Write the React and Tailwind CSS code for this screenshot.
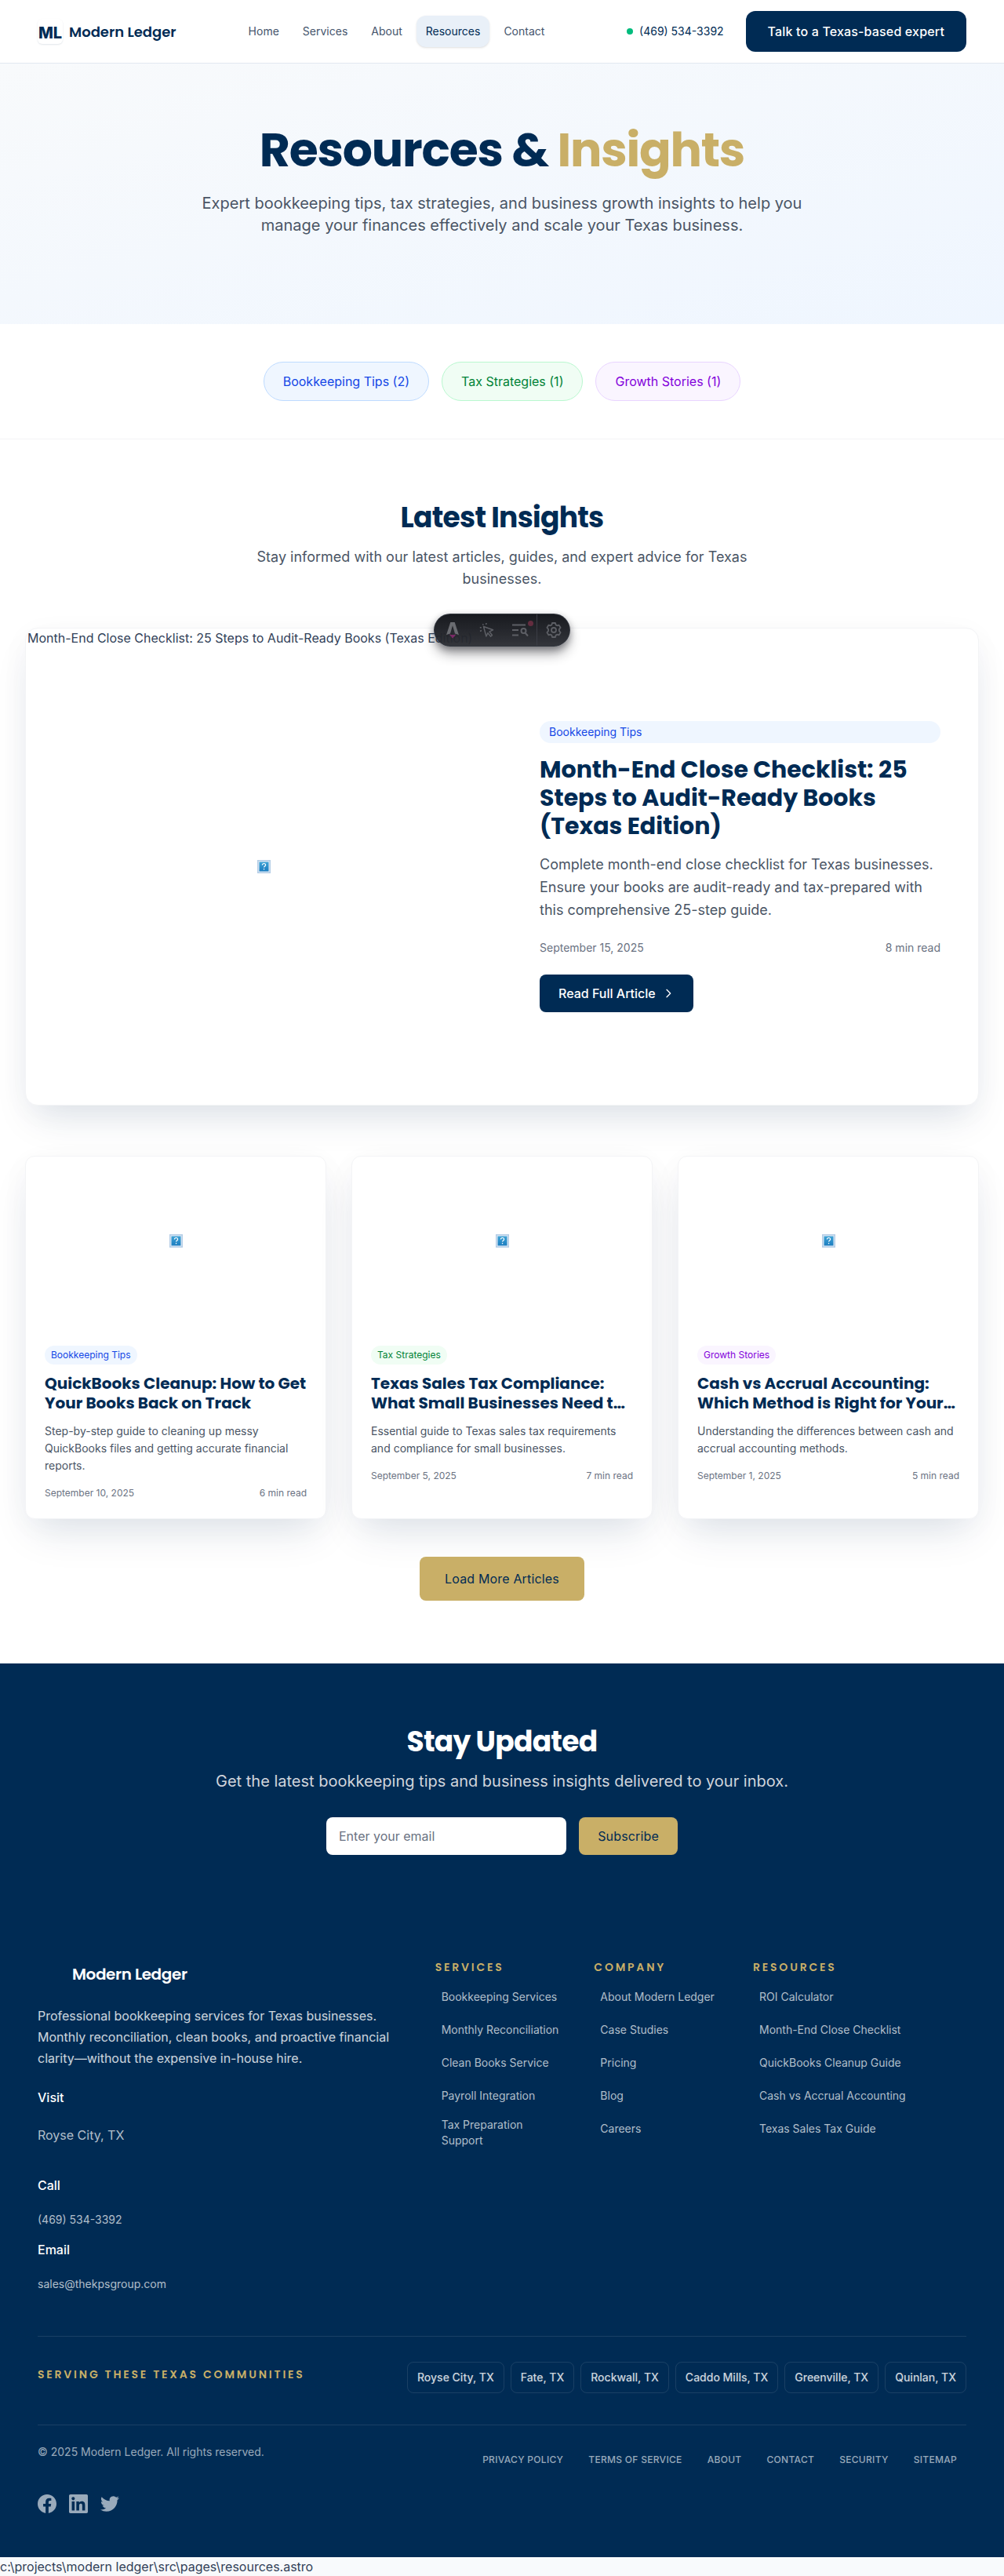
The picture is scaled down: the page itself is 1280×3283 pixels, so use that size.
import React from "react";

const HEAD = "font-['Poppins','Inter',sans-serif]";
const SHADOW = "shadow-[0_25px_50px_-12px_rgba(0,43,84,0.13),0_8px_40px_rgba(0,43,84,0.03)]";

const NAV = ["Home", "Services", "About", "Resources", "Contact"];

const TONES = {
  blue: "border-blue-200 bg-blue-50 text-blue-700",
  green: "border-green-200 bg-green-50 text-green-700",
  purple: "border-purple-200 bg-purple-50 text-purple-700",
};

const FILTERS = [
  { label: "Bookkeeping Tips (2)", tone: "blue" },
  { label: "Tax Strategies (1)", tone: "green" },
  { label: "Growth Stories (1)", tone: "purple" },
];

const ARTICLES = [
  {
    tag: "Bookkeeping Tips",
    tone: "blue",
    title: "QuickBooks Cleanup: How to Get Your Books Back on Track",
    text: "Step-by-step guide to cleaning up messy QuickBooks files and getting accurate financial reports.",
    date: "September 10, 2025",
    read: "6 min read",
  },
  {
    tag: "Tax Strategies",
    tone: "green",
    title: "Texas Sales Tax Compliance: What Small Businesses Need t…",
    text: "Essential guide to Texas sales tax requirements and compliance for small businesses.",
    date: "September 5, 2025",
    read: "7 min read",
  },
  {
    tag: "Growth Stories",
    tone: "purple",
    title: "Cash vs Accrual Accounting: Which Method is Right for Your…",
    text: "Understanding the differences between cash and accrual accounting methods.",
    date: "September 1, 2025",
    read: "5 min read",
  },
];

const COLUMNS = [
  {
    title: "Services",
    span: "col-span-2",
    links: ["Bookkeeping Services", "Monthly Reconciliation", "Clean Books Service", "Payroll Integration", "Tax Preparation Support"],
  },
  {
    title: "Company",
    span: "col-span-2",
    links: ["About Modern Ledger", "Case Studies", "Pricing", "Blog", "Careers"],
  },
  {
    title: "Resources",
    span: "col-span-3",
    links: ["ROI Calculator", "Month-End Close Checklist", "QuickBooks Cleanup Guide", "Cash vs Accrual Accounting", "Texas Sales Tax Guide"],
  },
];

const CITIES = ["Royse City, TX", "Fate, TX", "Rockwall, TX", "Caddo Mills, TX", "Greenville, TX", "Quinlan, TX"];
const LEGAL = ["Privacy Policy", "Terms of Service", "About", "Contact", "Security", "Sitemap"];

function MissingImage() {
  return (
    <svg width="17" height="17" viewBox="0 0 17 17" aria-hidden="true">
      <defs>
        <linearGradient id="missing" x1="0" y1="0" x2="0" y2="1">
          <stop offset="0" stopColor="#3fa3d6" />
          <stop offset="1" stopColor="#1b7dc0" />
        </linearGradient>
      </defs>
      <rect width="17" height="17" fill="#b4cde6" />
      <rect x="1.5" y="1.5" width="14" height="14" fill="#e3eef8" />
      <rect x="2.5" y="2.5" width="12" height="12" fill="url(#missing)" />
      <path d="M6.4 6.6c0-1.3.9-2.1 2.1-2.1s2.1.8 2.1 1.9c0 1.6-2 1.7-2 3.2" fill="none" stroke="#fff" strokeWidth="1.2" />
      <rect x="7.9" y="11" width="1.3" height="1.3" fill="#fff" />
    </svg>
  );
}

function DevToolbar() {
  return (
    <div className="absolute -top-[18px] left-1/2 flex h-[42px] w-[174px] -translate-x-1/2 overflow-visible rounded-full border border-[#343841]/90 bg-linear-to-b from-[#13151a]/98 to-[#2b2d33]/96 text-[#5d5f65] shadow-[0_10px_16px_-2px_rgba(19,21,26,0.45),0_3px_8px_rgba(19,21,26,0.3)]">
      <button type="button" aria-label="Menu" className="flex w-[46px] items-center justify-center">
        <svg width="20" height="22" viewBox="0 0 20 22" aria-hidden="true">
          <path d="M7.3 1h5.4L18 17.2a18 18 0 0 0-5-1.7L10 5.3 7 15.5a18 18 0 0 0-5 1.7z" fill="#6a6c71" />
          <path d="M6.4 16.2c2 1.2 5.2 1.2 7.2 0 .3 1.9-.8 2.7-1.7 3.2-.8.5-1.3 1.1-1.4 2-1.5-.3-2.2-1.1-2.1-2.3-1.1-.6-2.2-1.4-2-2.9z" fill="#7b2a67" />
        </svg>
      </button>
      <button type="button" aria-label="Inspect" className="flex w-[42px] items-center justify-center">
        <svg width="20" height="20" viewBox="0 0 20 20" fill="none" stroke="currentColor" strokeWidth="1.5" aria-hidden="true">
          <path d="M5.500 5.500l12 4.300-4.600 2.300 3.600 4.300-2 1.700-3.600-4.400-2 4.300z" strokeLinejoin="round" />
          <path d="M1 11.500l2-1M.8 6.800h2M4.500 2.200l.7 1.500M9 1l-.3 2" />
        </svg>
      </button>
      <button type="button" aria-label="Audit" className="relative flex w-[42px] items-center justify-center">
        <svg width="22" height="18" viewBox="0 0 22 18" fill="none" stroke="currentColor" strokeWidth="2" aria-hidden="true">
          <path d="M1 2.500h17M1 9h8M1 15.500h8" />
          <circle cx="15.500" cy="10" r="3" />
          <path d="M17.500 12.500l3.500 4" />
        </svg>
        <span className="absolute top-2 right-1 size-[7px] rounded-full bg-[#632d3f]" />
      </button>
      <button type="button" aria-label="Settings" className="flex flex-1 items-center justify-center border-l border-[#3b3d45]">
        <svg width="20" height="20" viewBox="0 0 20 20" fill="none" stroke="currentColor" strokeWidth="1.800" strokeLinejoin="round" aria-hidden="true">
          <path d="M8 1h4l.6 2.400 1.600.9 2.400-.7 2 3.400-1.700 1.800v2.400l1.700 1.800-2 3.400-2.400-.7-1.600.9L12 19H8l-.6-2.400-1.600-.9-2.400.7-2-3.400 1.700-1.800V8.800L1.400 7l2-3.400 2.400.7 1.600-.9z" />
          <circle cx="10" cy="10" r="3" />
        </svg>
      </button>
    </div>
  );
}

function Header() {
  return (
    <header className="border-b border-slate-200 bg-white">
      <div className="flex h-20 items-center px-12">
        <a href="#" className="mr-20 flex items-center gap-2 text-[#002b54]">
          <span className="flex size-8 items-center justify-center rounded-md pt-1 text-xl font-extrabold shadow-[0_1px_2px_rgba(0,43,84,0.12)]">ML</span>
          <span className={`${HEAD} text-[18px] font-semibold`}>Modern Ledger</span>
        </a>
        <nav className="flex gap-1.5 text-sm">
          {NAV.map((item) =>
            item === "Resources" ? (
              <a key={item} href="#" aria-current="page" className="rounded-xl bg-[#e9f0f8] px-3 py-2.5 text-[#002b54] shadow-sm">{item}</a>
            ) : (
              <a key={item} href="#" className="px-3 py-2.5 text-slate-600">{item}</a>
            )
          )}
        </nav>
        <div className="ml-auto flex items-center gap-7">
          <a href="#" className="flex items-center gap-2 text-sm text-[#002b54]">
            <span className="size-2 rounded-full bg-emerald-500" />
            (469) 534-3392
          </a>
          <a href="#" className="rounded-xl bg-[#002b54] px-7 py-[14px] text-base font-medium tracking-[0.01em] text-white">Talk to a Texas-based expert</a>
        </div>
      </div>
    </header>
  );
}

function Featured() {
  return (
    <div className="relative">
      <article className={`grid min-h-[609px] grid-cols-2 overflow-hidden rounded-2xl border border-gray-100 bg-white ${SHADOW}`}>
        <div className="relative flex items-center justify-center">
          <MissingImage />
          <span className="absolute top-0 left-0.5 text-base whitespace-nowrap text-slate-700">
            Month-End Close Checklist: 25 Steps to Audit-Ready Books (Texas Edition)
          </span>
        </div>
        <div className="flex flex-col justify-center px-12">
          <span className="mb-4 rounded-full bg-blue-50 px-3 py-1 text-sm text-blue-700">Bookkeeping Tips</span>
          <h3 className={`${HEAD} mb-4 text-[30px] leading-9 font-bold text-[#002b54]`}>
            Month-End Close Checklist: 25 Steps to Audit-Ready Books (Texas Edition)
          </h3>
          <p className="mb-6 text-lg leading-[29px] text-gray-600">
            Complete month-end close checklist for Texas businesses. Ensure your books are audit-ready and tax-prepared with this comprehensive 25-step guide.
          </p>
          <div className="mb-6 flex justify-between text-sm text-gray-500">
            <time>September 15, 2025</time>
            <span>8 min read</span>
          </div>
          <a href="#" className="flex items-center gap-2 self-start rounded-lg bg-[#002b54] px-6 py-3 text-base font-medium text-white">
            Read Full Article
            <svg width="16" height="16" viewBox="0 0 24 24" fill="none" stroke="currentColor" strokeWidth="2" strokeLinecap="round" strokeLinejoin="round" aria-hidden="true">
              <path d="M9 5l7 7-7 7" />
            </svg>
          </a>
        </div>
      </article>
      <DevToolbar />
    </div>
  );
}

function ArticleCard({ article }) {
  return (
    <article className={`overflow-hidden rounded-xl border border-gray-100 bg-white ${SHADOW}`}>
      <div className="flex aspect-video items-center justify-center">
        <MissingImage />
      </div>
      <div className="flex flex-col items-start px-6 pt-[26px] pb-6">
        <span className={`mb-3 rounded-full px-2 py-1 text-xs ${TONES[article.tone]}`}>{article.tag}</span>
        <h3 className={`${HEAD} mb-3 text-xl leading-[25px] font-bold text-[#002b54]`}>{article.title}</h3>
        <p className="mb-4 text-sm leading-[22px] text-gray-600">{article.text}</p>
        <div className="flex w-full justify-between text-xs text-gray-500">
          <time>{article.date}</time>
          <span>{article.read}</span>
        </div>
      </div>
    </article>
  );
}

function Footer() {
  return (
    <footer className="bg-[#002b54] px-12 pt-14 pb-14">
      <div className="grid grid-cols-12 gap-8 pb-11">
        <div className="col-span-5">
          <a href="#" className={`${HEAD} flex h-8 items-center pl-11 text-xl font-semibold tracking-[-0.02em] text-white`}>Modern Ledger</a>
          <p className="mt-6 max-w-[460px] text-base leading-[27px] text-white/80">
            Professional bookkeeping services for Texas businesses. Monthly reconciliation, clean books, and proactive financial clarity—without the expensive in-house hire.
          </p>
          <h4 className="mt-6 text-base font-medium text-white">Visit</h4>
          <p className="mt-6 text-base text-white/70">Royse City, TX</p>
          <h4 className="mt-10 text-base font-medium text-white">Call</h4>
          <a href="#" className="mt-2.5 flex h-11 items-center text-sm text-white/70">(469) 534-3392</a>
          <h4 className="mt-1 text-base font-medium text-white">Email</h4>
          <a href="#" className="mt-2.5 flex h-11 items-center text-sm text-white/70">sales@thekpsgroup.com</a>
        </div>
        {COLUMNS.map((col) => (
          <nav key={col.title} aria-label={col.title} className={col.span}>
            <h4 className={`${HEAD} mb-3 text-sm leading-[14px] font-semibold tracking-[0.2em] text-[#c9af67] uppercase`}>{col.title}</h4>
            <ul className="flex flex-col gap-1">
              {col.links.map((link) => (
                <li key={link}>
                  <a href="#" className="flex min-h-[38px] items-center px-2 py-1 text-sm text-white/70">{link}</a>
                </li>
              ))}
            </ul>
          </nav>
        ))}
      </div>
      <div className="flex justify-between border-t border-white/10 pt-8 pb-10">
        <h4 className={`${HEAD} text-sm leading-8 font-semibold tracking-[0.2em] text-[#c9af67] uppercase`}>Serving these Texas communities</h4>
        <ul className="flex gap-2">
          {CITIES.map((city) => (
            <li key={city}>
              <a href="#" className="flex h-10 items-center rounded-lg border border-white/10 px-3 text-sm font-medium text-white/80">{city}</a>
            </li>
          ))}
        </ul>
      </div>
      <div className="flex items-start justify-between border-t border-white/10 pt-6">
        <div>
          <p className="text-sm text-white/60">© 2025 Modern Ledger. All rights reserved.</p>
          <div className="mt-11 flex gap-4 text-[#99aabb]">
            <a href="#" aria-label="Facebook">
              <svg width="24" height="24" viewBox="0 0 24 24" fill="currentColor" aria-hidden="true">
                <path d="M24 12.073c0-6.627-5.373-12-12-12s-12 5.373-12 12c0 5.990 4.388 10.954 10.125 11.854v-8.385H7.078v-3.470h3.047V9.430c0-3.007 1.792-4.669 4.533-4.669 1.312 0 2.686.235 2.686.235v2.953H15.830c-1.491 0-1.956.925-1.956 1.874v2.250h3.328l-.532 3.470h-2.796v8.385C19.612 23.027 24 18.062 24 12.073z" />
              </svg>
            </a>
            <a href="#" aria-label="LinkedIn">
              <svg width="24" height="24" viewBox="0 0 24 24" fill="currentColor" aria-hidden="true">
                <path d="M20.447 20.452h-3.554v-5.569c0-1.328-.027-3.037-1.852-3.037-1.853 0-2.136 1.445-2.136 2.939v5.667H9.351V9h3.414v1.561h.046c.477-.9 1.637-1.850 3.370-1.850 3.601 0 4.267 2.370 4.267 5.455v6.286zM5.337 7.433c-1.144 0-2.063-.926-2.063-2.065 0-1.138.920-2.063 2.063-2.063 1.140 0 2.064.925 2.064 2.063 0 1.139-.925 2.065-2.064 2.065zm1.782 13.019H3.555V9h3.564v11.452zM22.225 0H1.771C.792 0 0 .774 0 1.729v20.542C0 23.227.792 24 1.771 24h20.451C23.200 24 24 23.227 24 22.271V1.729C24 .774 23.200 0 22.222 0h.003z" />
              </svg>
            </a>
            <a href="#" aria-label="Twitter">
              <svg width="24" height="24" viewBox="0 0 24 24" fill="currentColor" aria-hidden="true">
                <path d="M23.953 4.570a10 10 0 01-2.825.775 4.958 4.958 0 002.163-2.723c-.951.555-2.005.959-3.127 1.184a4.920 4.920 0 00-8.384 4.482C7.690 8.095 4.067 6.130 1.640 3.162a4.822 4.822 0 00-.666 2.475c0 1.710.870 3.213 2.188 4.096a4.904 4.904 0 01-2.228-.616v.060a4.923 4.923 0 003.946 4.827 4.996 4.996 0 01-2.212.085 4.936 4.936 0 004.604 3.417 9.867 9.867 0 01-6.102 2.105c-.390 0-.779-.023-1.170-.067a13.995 13.995 0 007.557 2.209c9.053 0 13.998-7.496 13.998-13.985 0-.210 0-.420-.015-.630A9.935 9.935 0 0024 4.590z" />
              </svg>
            </a>
          </div>
        </div>
        <nav aria-label="Legal" className="flex gap-2">
          {LEGAL.map((item) => (
            <a key={item} href="#" className="flex h-10 items-center px-3 text-xs font-medium tracking-wide text-white/60 uppercase">{item}</a>
          ))}
        </nav>
      </div>
    </footer>
  );
}

export default function App() {
  return (
    <div className="bg-slate-50 font-['Inter',sans-serif]">
      <Header />
      <main className="bg-white">
        <section className="bg-linear-to-br from-slate-50 to-blue-50 px-8 pt-20 pb-28 text-center">
          <h1 className={`${HEAD} mb-6 text-[60px] leading-[60px] font-bold tracking-[-0.02em] text-[#002b54]`}>
            Resources &amp; <span className="text-[#c9af67]">Insights</span>
          </h1>
          <p className="mx-auto max-w-3xl text-xl leading-7 text-gray-600">
            Expert bookkeeping tips, tax strategies, and business growth insights to help you manage your finances effectively and scale your Texas business.
          </p>
        </section>

        <section className="flex justify-center gap-4 border-b border-gray-100 py-12">
          {FILTERS.map((f) => (
            <a key={f.label} href="#" className={`rounded-full border px-6 py-3 text-base ${TONES[f.tone]}`}>{f.label}</a>
          ))}
        </section>

        <section className="px-8 py-20">
          <div className="mb-12 text-center">
            <h2 className={`${HEAD} mb-4 text-[36px] leading-10 font-bold tracking-[-0.02em] text-[#002b54]`}>Latest Insights</h2>
            <p className="mx-auto max-w-2xl text-lg leading-7 text-gray-600">
              Stay informed with our latest articles, guides, and expert advice for Texas businesses.
            </p>
          </div>
          <Featured />
          <div className="mt-16 grid grid-cols-3 gap-8">
            {ARTICLES.map((a) => (
              <ArticleCard key={a.title} article={a} />
            ))}
          </div>
          <div className="mt-12 flex justify-center">
            <button type="button" className="rounded-lg bg-[#c9af67] px-8 py-4 text-base tracking-[0.01em] text-[#002b54]">Load More Articles</button>
          </div>
        </section>

        <section className="bg-[#002b54] px-8 py-20 text-center">
          <h2 className={`${HEAD} mb-4 text-[36px] leading-10 font-bold tracking-[-0.02em] text-white`}>Stay Updated</h2>
          <p className="mb-8 text-xl leading-7 text-gray-300">Get the latest bookkeeping tips and business insights delivered to your inbox.</p>
          <form className="mx-auto flex max-w-md gap-4">
            <input type="email" aria-label="Email address" placeholder="Enter your email" className="h-12 min-w-0 flex-1 rounded-lg bg-white px-4 text-base text-gray-900 placeholder:text-gray-500" />
            <button type="button" className="rounded-lg bg-[#c9af67] px-6 text-base tracking-[0.01em] text-[#002b54]">Subscribe</button>
          </form>
        </section>
      </main>
      <Footer />
      <p className="text-base text-slate-700">c:\projects\modern ledger\src\pages\resources.astro</p>
    </div>
  );
}
